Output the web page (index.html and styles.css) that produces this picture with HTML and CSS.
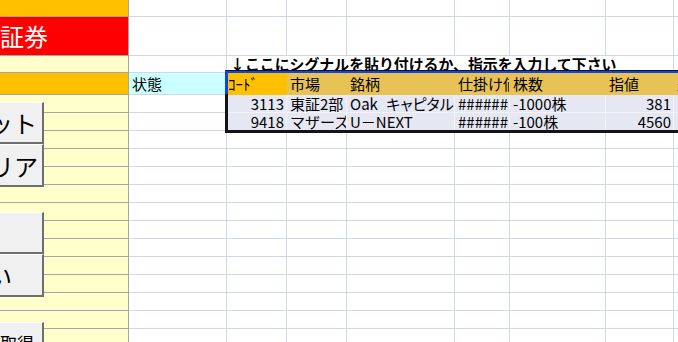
FILE: index.html
```html
<!DOCTYPE html>
<html lang="ja">
<head>
    <meta charset="UTF-8">
    <meta name="viewport" content="width=device-width, initial-scale=1.0">
    <title>シグナル入力</title>
    <link rel="stylesheet" href="styles.css">
</head>
<body>
    <div class="sheet">
        <!-- 1行目 -->
        <div class="row h17">
            <div class="cell col-a orange"></div>
            <div class="cell"></div><div class="cell"></div><div class="cell"></div><div class="cell"></div>
            <div class="cell"></div><div class="cell"></div><div class="cell"></div><div class="cell"></div>
        </div>
        <!-- タイトル -->
        <div class="row h39">
            <div class="cell col-a red"><span class="brand">証券</span></div>
            <div class="cell"></div><div class="cell"></div><div class="cell"></div><div class="cell"></div>
            <div class="cell"></div><div class="cell"></div><div class="cell"></div><div class="cell"></div>
        </div>
        <!-- 説明 -->
        <div class="row h17">
            <div class="cell col-a yellow"></div>
            <div class="cell"></div>
            <div class="cell note">↓ここにシグナルを貼り付けるか、指示を入力して下さい</div>
            <div class="cell"></div>
        </div>
        <!-- 見出し -->
        <div class="row h22">
            <div class="cell col-a orange"></div>
            <div class="cell cyan">状態</div>
            <div class="cell head active">ｺｰﾄﾞ</div>
            <div class="cell head">市場</div>
            <div class="cell head">銘柄</div>
            <div class="cell head">仕掛け値</div>
            <div class="cell head">株数</div>
            <div class="cell head">指値</div>
            <div class="cell head">逆指値</div>
        </div>
        <!-- データ -->
        <div class="row">
            <div class="cell col-a yellow"></div>
            <div class="cell"></div>
            <div class="cell data num">3113</div>
            <div class="cell data">東証2部</div>
            <div class="cell data name">Oak キャピタル</div>
            <div class="cell data">######</div>
            <div class="cell data">-1000株</div>
            <div class="cell data num">381</div>
            <div class="cell data"></div>
        </div>
        <div class="row">
            <div class="cell col-a yellow"></div>
            <div class="cell"></div>
            <div class="cell data num">9418</div>
            <div class="cell data">マザーズ</div>
            <div class="cell data name">U－NEXT</div>
            <div class="cell data">######</div>
            <div class="cell data">-100株</div>
            <div class="cell data num">4560</div>
            <div class="cell data"></div>
        </div>
        <div class="row"><div class="cell col-a yellow"></div><div class="cell"></div><div class="cell"></div><div class="cell"></div><div class="cell"></div><div class="cell"></div><div class="cell"></div><div class="cell"></div><div class="cell"></div></div>
        <div class="row"><div class="cell col-a yellow"></div><div class="cell"></div><div class="cell"></div><div class="cell"></div><div class="cell"></div><div class="cell"></div><div class="cell"></div><div class="cell"></div><div class="cell"></div></div>
        <div class="row"><div class="cell col-a yellow"></div><div class="cell"></div><div class="cell"></div><div class="cell"></div><div class="cell"></div><div class="cell"></div><div class="cell"></div><div class="cell"></div><div class="cell"></div></div>
        <div class="row"><div class="cell col-a yellow"></div><div class="cell"></div><div class="cell"></div><div class="cell"></div><div class="cell"></div><div class="cell"></div><div class="cell"></div><div class="cell"></div><div class="cell"></div></div>
        <div class="row"><div class="cell col-a yellow"></div><div class="cell"></div><div class="cell"></div><div class="cell"></div><div class="cell"></div><div class="cell"></div><div class="cell"></div><div class="cell"></div><div class="cell"></div></div>
        <div class="row"><div class="cell col-a yellow"></div><div class="cell"></div><div class="cell"></div><div class="cell"></div><div class="cell"></div><div class="cell"></div><div class="cell"></div><div class="cell"></div><div class="cell"></div></div>
        <div class="row"><div class="cell col-a yellow"></div><div class="cell"></div><div class="cell"></div><div class="cell"></div><div class="cell"></div><div class="cell"></div><div class="cell"></div><div class="cell"></div><div class="cell"></div></div>
        <div class="row"><div class="cell col-a yellow"></div><div class="cell"></div><div class="cell"></div><div class="cell"></div><div class="cell"></div><div class="cell"></div><div class="cell"></div><div class="cell"></div><div class="cell"></div></div>
        <div class="row"><div class="cell col-a yellow"></div><div class="cell"></div><div class="cell"></div><div class="cell"></div><div class="cell"></div><div class="cell"></div><div class="cell"></div><div class="cell"></div><div class="cell"></div></div>
        <div class="row"><div class="cell col-a yellow"></div><div class="cell"></div><div class="cell"></div><div class="cell"></div><div class="cell"></div><div class="cell"></div><div class="cell"></div><div class="cell"></div><div class="cell"></div></div>
        <div class="row"><div class="cell col-a yellow"></div><div class="cell"></div><div class="cell"></div><div class="cell"></div><div class="cell"></div><div class="cell"></div><div class="cell"></div><div class="cell"></div><div class="cell"></div></div>
        <div class="row"><div class="cell col-a yellow"></div><div class="cell"></div><div class="cell"></div><div class="cell"></div><div class="cell"></div><div class="cell"></div><div class="cell"></div><div class="cell"></div><div class="cell"></div></div>

        <!-- 選択範囲の枠 -->
        <div class="selection"></div>
        <div class="selection-head"></div>

        <!-- シート上のボタン -->
        <div class="sheet-btn btn1">リセット</div>
        <div class="sheet-btn btn2">クリア</div>
        <div class="sheet-btn btn3">シグナル発注</div>
        <div class="sheet-btn btn4">発注しない</div>
        <div class="sheet-btn btn5 small">状態取得</div>
    </div>
</body>
</html>
```

FILE: styles.css
```css
* {
    box-sizing: border-box;
}
body {
    margin: 0;
    background: #fff;
    font-family: "Noto Sans CJK JP", "Noto Sans", sans-serif;
    color: #000;
}

/* シート */
.sheet {
    position: relative;
    width: 678px;
    height: 342px;
    overflow: hidden;
}
.row {
    display: grid;
    grid-template-columns: 129px 98px 60px 60px 108px 55px 96px 68px 80px;
    height: 18px;
}
.h17 {
    height: 17px;
}
.h22 {
    height: 22px;
}
.h39 {
    height: 39px;
}
.cell {
    border-right: 1px solid #d0d7e5;
    border-bottom: 1px solid #d0d7e5;
    font-size: 15px;
    line-height: 17px;
    white-space: nowrap;
    overflow: hidden;
    padding: 0 2px;
    display: flex;
    align-items: center;
}
.col-a {
    border-color: #a5a5a5;
}
.orange {
    background: #ffc000;
}
.red {
    background: #ff0000;
}
.yellow {
    background: #ffffcc;
}
.cyan {
    background: #ccffff;
    border-right-color: #ccffff;
    padding-left: 3px;
}
.brand {
    color: #fff;
    font-size: 24px;
    margin-left: -2px;
    margin-top: -2px;
}

/* 説明文 */
.note {
    grid-column: span 6;
    font-weight: bold;
    font-size: 14.9px;
    line-height: 15px;
    align-items: flex-start;
    padding-left: 3px;
    overflow: visible;
}

/* 見出し */
.head {
    background: #e8c254;
    border-color: #e8c254;
    padding-left: 3px;
}
.head.active {
    background: #ffc000;
    border-color: #ffc000;
    padding-left: 1px;
}

/* データ */
.data {
    background: #e5e8f3;
    border-color: #f2f3f9;
    padding-left: 3px;
}
.name {
    font-feature-settings: "palt";
    word-spacing: 5px;
}
.num {
    justify-content: flex-end;
    padding-right: 2px;
}

/* 選択範囲 */
.selection {
    position: absolute;
    left: 225px;
    top: 70px;
    width: 480px;
    height: 63px;
    border: 3px solid #141414;
}
.selection-head {
    position: absolute;
    left: 225px;
    top: 71px;
    width: 480px;
    height: 23px;
    border-top: 2px solid #0a46e6;
    border-left: 3px solid #0a46e6;
}

/* ボタン */
.sheet-btn {
    position: absolute;
    right: 634px;
    width: 140px;
    display: flex;
    align-items: center;
    justify-content: flex-end;
    background: #f0f0f0;
    border-top: 1px solid #fff;
    border-left: 1px solid #fff;
    border-right: 2px solid #6e6e6e;
    border-bottom: 2px solid #6e6e6e;
    font-size: 24px;
    white-space: nowrap;
}
.btn1 {
    top: 102px;
    height: 42px;
    padding-right: 5px;
}
.btn2 {
    top: 144px;
    height: 43px;
    padding-right: 4px;
}
.btn3 {
    top: 212px;
    height: 42px;
    padding-right: 56px;
}
.btn4 {
    top: 254px;
    height: 43px;
    padding-right: 30px;
}
.btn5 {
    top: 322px;
    height: 42px;
    padding-right: 8px;
}
.small {
    font-size: 17px;
}
```
